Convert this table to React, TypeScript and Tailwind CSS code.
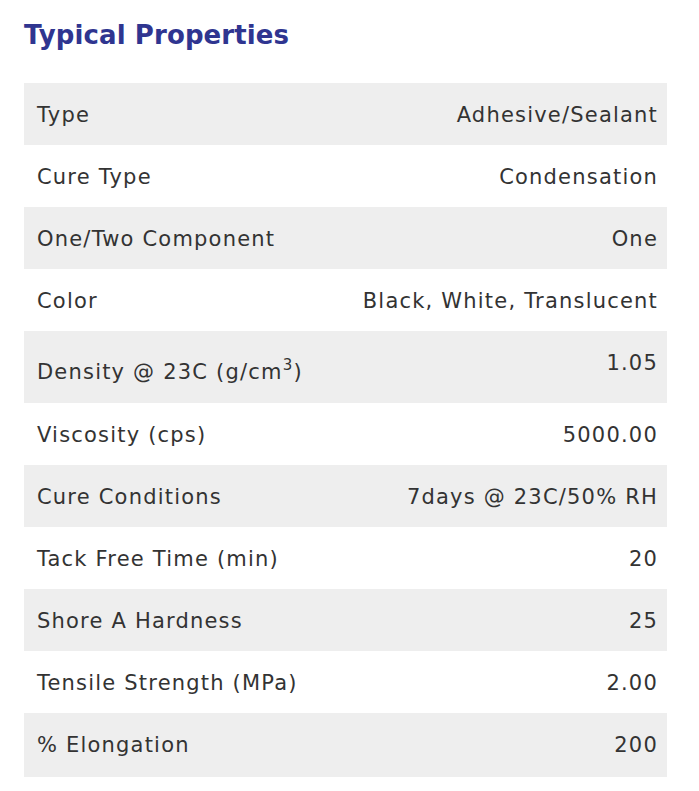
import React from "react";

const rows: { label: React.ReactNode; value: string; tall?: boolean }[] = [
  { label: "Type", value: "Adhesive/Sealant" },
  { label: "Cure Type", value: "Condensation" },
  { label: "One/Two Component", value: "One" },
  { label: "Color", value: "Black, White, Translucent" },
  {
    label: (
      <>
        Density @ 23C (g/cm<span className="text-[15px] relative -top-[9px]">3</span>)
      </>
    ),
    value: "1.05",
    tall: true,
  },
  { label: "Viscosity (cps)", value: "5000.00" },
  { label: "Cure Conditions", value: "7days @ 23C/50% RH" },
  { label: "Tack Free Time (min)", value: "20" },
  { label: "Shore A Hardness", value: "25" },
  { label: "Tensile Strength (MPa)", value: "2.00" },
  { label: "% Elongation", value: "200" },
];

export default function App() {
  return (
    <div className="w-[699px] h-[791px] bg-white overflow-hidden" style={{ fontFamily: '"DejaVu Sans", sans-serif' }}>
      <div className="pl-6 pr-8 pt-[15px] pb-[14px] border-b border-[#f0f0f0]">
        <h2 className="text-[26px] leading-[40px] font-bold text-[#2f3590] tracking-[0.1px]">Typical Properties</h2>
        <div className="mt-[28px] flex flex-col text-[#333333] text-[21px] leading-[32px] tracking-[1.2px]">
          {rows.map((r, i) => (
            <div
              key={i}
              className={`flex justify-between items-start ${i % 2 === 0 ? "bg-[#eeeeee]" : "bg-white"} ${r.tall ? "h-[72px]" : i === rows.length - 1 ? "h-[64px]" : "h-[62px]"}`}
            >
              <div className={`pl-[13px] ${r.tall ? "pt-[25px]" : "pt-[16px]"}`}>{r.label}</div>
              <div className="pr-[9px] pt-[16px] text-right">{r.value}</div>
            </div>
          ))}
        </div>
      </div>
    </div>
  );
}
